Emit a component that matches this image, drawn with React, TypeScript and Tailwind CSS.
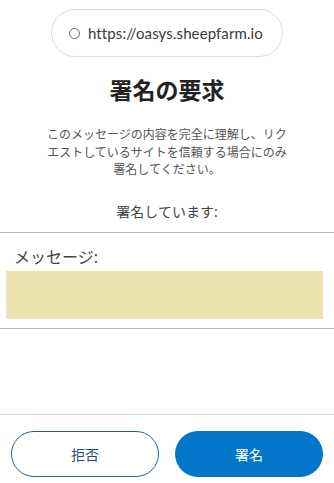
export default function App() {
  return (
    <div
      className="w-[334px] h-[483px] bg-white flex flex-col overflow-hidden"
      style={{ fontFamily: '"Noto Sans", "Noto Sans CJK JP", sans-serif' }}
    >
      {/* URL */}
      <div className="mt-[9px] mx-auto w-[232px] h-[48px] rounded-full border border-[#dcdcdc] flex items-center pl-[17px] gap-[8px]">
        <span className="w-[11px] h-[11px] rounded-full border-[1.5px] border-[#666]" />
        <span className="text-[15px] text-[#3a3a3a] font-['Lato','Noto_Sans',sans-serif] tracking-[0.1px]">
          https://oasys.sheepfarm.io
        </span>
      </div>

      <h1 className="mt-[18px] text-center text-[23px] leading-[30px] font-bold text-[#222]">署名の要求</h1>

      <p className="mt-[21px] px-[44px] text-center text-[12px] leading-[17.5px] text-[#555]">
        このメッセージの内容を完全に理解し、リクエストしているサイトを信頼する場合にのみ署名してください。
      </p>

      <p className="mt-[23px] text-center text-[14px] leading-[20px] text-[#444]">署名しています:</p>

      <div className="mt-[10px] border-t border-[#bdbdbd]" />
      <p className="mt-[13px] pl-[14px] text-[16px] leading-[22px] text-[#444]">メッセージ:</p>
      <div className="mt-[3px] ml-[6px] w-[317px] h-[48px] bg-[#ede3b0]" />
      <div className="mt-[9px] border-t border-[#bdbdbd]" />

      <div className="flex-1" />
      <div className="border-t border-[#dedede]" />
      <div className="mt-[16px] mb-[6px] px-[11px] flex gap-[16px]">
        <button className="w-[148px] h-[46px] rounded-full border border-[#1d5f9c] text-[#1d4f86] text-[14px]">
          拒否
        </button>
        <button className="w-[148px] h-[46px] rounded-full bg-[#0376c9] text-white text-[14px]">
          署名
        </button>
      </div>
    </div>
  );
}
